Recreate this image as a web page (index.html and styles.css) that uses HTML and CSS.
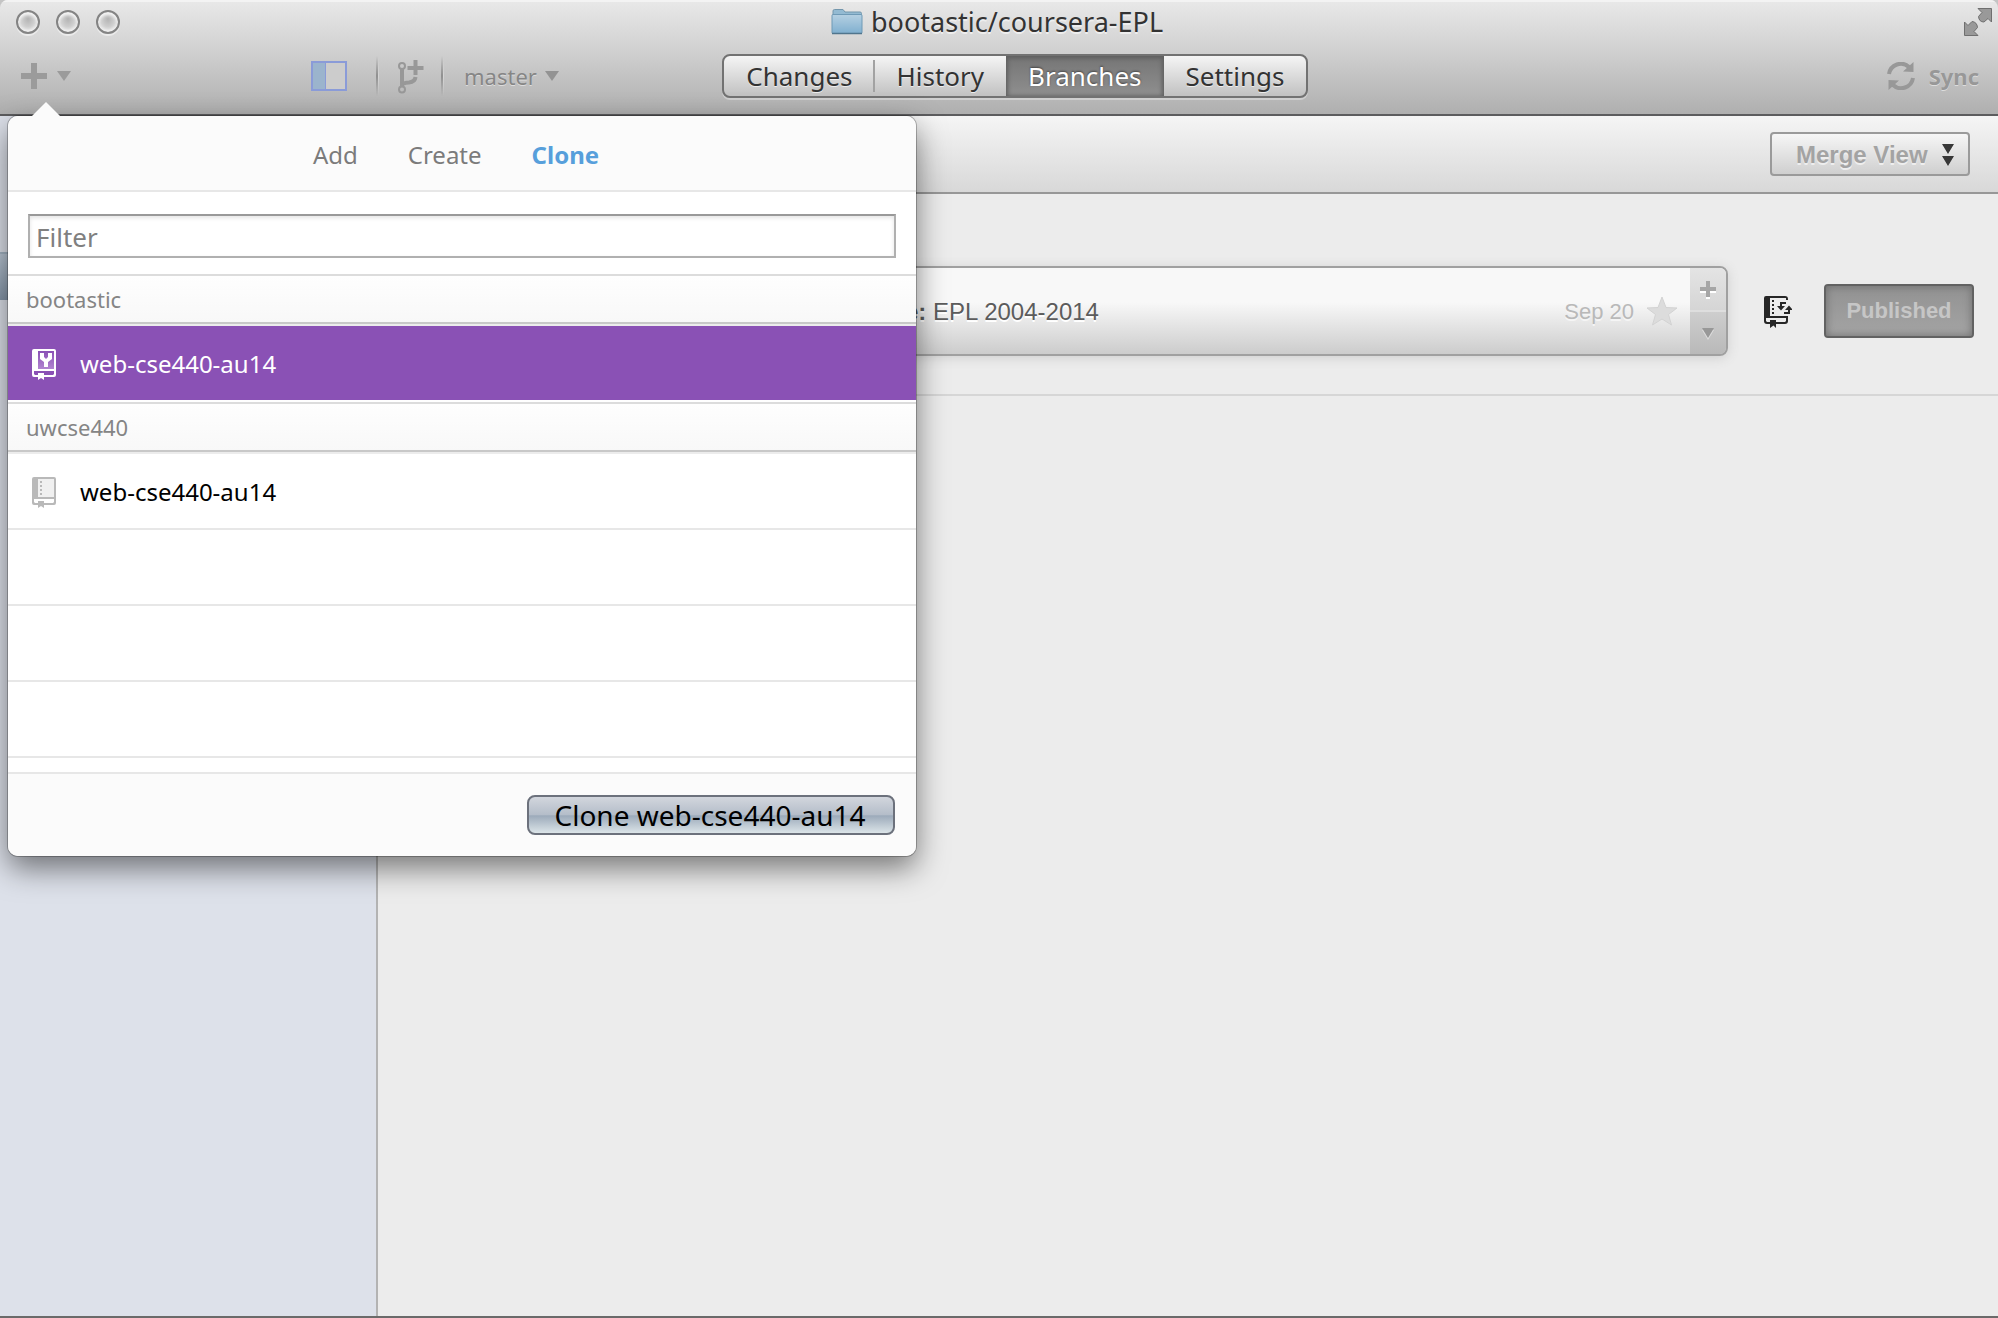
FILE: index.html
```
<!DOCTYPE html>
<html lang="en">
<head>
<meta charset="utf-8">
<title>bootastic/coursera-EPL</title>
<link rel="stylesheet" href="styles.css">
</head>
<body>
<div class="window">
  <header class="chrome">
    <div class="titlebar">
      <div class="lights">
        <button class="light" aria-label="Close"></button>
        <button class="light" aria-label="Minimize"></button>
        <button class="light" aria-label="Zoom"></button>
      </div>
      <h1 class="title">
        <svg width="32" height="28" viewBox="0 0 32 28" aria-hidden="true">
          <defs><linearGradient id="folder" x1="0" y1="0" x2="0" y2="1"><stop offset="0" stop-color="#b5d0e2"/><stop offset="1" stop-color="#7fafcf"/></linearGradient></defs>
          <path d="M2 6V3Q2 1.500 3.500 1.500H12L14 4H29Q30.500 4 30.500 5.500V8H2Z" fill="#93bad2" stroke="#7396ac"/>
          <rect x="1" y="6.500" width="30" height="19" rx="1" fill="url(#folder)" stroke="#6f9ab6"/>
          <path d="M1 25.500H31" stroke="#50758d" stroke-width="1.500"/>
        </svg>
        <span>bootastic/coursera-EPL</span>
      </h1>
      <button class="fullscreen" aria-label="Enter full screen">
        <svg width="28" height="28" viewBox="0 0 28 28"><g fill="#999" stroke="#6f6f6f"><path d="M14 .500H27.500V14L24 10.500L20 14Q15 14 14.500 8.500L18 4.500Z"/><path d="M14 27.500H.500V14L4 17.500L8 13.500Q13 14 13.500 19.500L10 23.500Z"/></g></svg>
      </button>
    </div>
    <div class="toolbar">
      <div class="tools">
        <div class="tools-side">
          <button class="tool add" aria-label="Add repository">
            <svg width="26" height="26" viewBox="0 0 26 26"><path d="M10 0H16V10H26V16H16V26H10V16H0V10H10Z" fill="#9b9b9b"/></svg>
            <svg width="14" height="10" viewBox="0 0 14 10"><path d="M0 0H14L7 10Z" fill="#9b9b9b"/></svg>
          </button>
          <button class="tool" aria-label="Toggle sidebar">
            <svg width="36" height="30" viewBox="0 0 36 30"><rect x="1" y="1" width="34" height="28" fill="#cccccc" stroke="#8a9bd8" stroke-width="2"/><rect x="2" y="2" width="12" height="26" fill="#9bb4cd"/><path d="M14.500 2V28" stroke="#8a9bd8"/></svg>
          </button>
        </div>
        <span class="rule"></span>
        <button class="tool branch-new" aria-label="New branch">
          <svg width="28" height="36" viewBox="0 -2 28 36" fill="none" stroke="#989898">
            <circle cx="5" cy="6" r="3" stroke-width="2"/><circle cx="5" cy="29.500" r="3" stroke-width="2"/>
            <path d="M5 9V26.500" stroke-width="4"/><path d="M6 24Q8 22.500 12 22.500Q18 22 18.500 17" stroke-width="4"/>
            <path d="M18.500 0V15M10.500 8H26.500" stroke-width="4"/>
          </svg>
        </button>
        <span class="rule"></span>
        <button class="tool branch-pick">master
          <svg width="14" height="10" viewBox="0 0 14 10"><path d="M0 0H14L7 10Z" fill="#939393"/></svg>
        </button>
      </div>
      <nav class="segments">
        <button class="segment divided">Changes</button>
        <button class="segment">History</button>
        <button class="segment active">Branches</button>
        <button class="segment">Settings</button>
      </nav>
      <button class="tool sync">
        <svg width="28" height="28" viewBox="0 0 28 28"><path d="M2 12A12 12 0 0 1 22 5M26 16A12 12 0 0 1 6 23" fill="none" stroke="#989898" stroke-width="4"/><path d="M26.500 0V10L16 9.500ZM1.500 28V18L12 18.500Z" fill="#989898"/></svg>
        Sync
      </button>
    </div>
  </header>

  <div class="body">
    <aside class="sidebar"><div class="sidebar-selected"></div></aside>
    <main class="main">
      <div class="subbar">
        <button class="merge">Merge View
          <svg width="12" height="22" viewBox="0 0 12 22"><path d="M0 0H12L6 10ZM0 12H12L6 22Z" fill="#383838"/></svg>
        </button>
      </div>
      <section class="branch-row">
        <div class="card">
          <p class="commit"><b>e:</b> EPL 2004-2014</p>
          <time class="date">Sep 20</time>
          <svg class="star" width="32" height="30" viewBox="0 0 32 30" aria-hidden="true"><path d="M16 1L20 11.500L31 12L22.500 18.500L25.500 29L16 23L6.500 29L9.500 18.500L1 12L12 11.500Z" fill="#dcdcdc" stroke="#d2d2d2"/></svg>
          <div class="card-actions">
            <button class="card-action" aria-label="Add"><svg width="16" height="18" viewBox="0 0 16 18"><path d="M8 2V18M0 10H16" stroke="#fff" stroke-width="4"/><path d="M8 0V16M0 8H16" stroke="#a6a6a6" stroke-width="4"/></svg></button>
            <button class="card-action lower" aria-label="More"><svg width="12" height="12" viewBox="0 0 12 12"><path d="M0 2H12L6 12Z" fill="#ddd"/><path d="M0 0H12L6 10Z" fill="#989898"/></svg></button>
          </div>
        </div>
        <svg class="repo" width="32" height="36" viewBox="0 -2 32 36" aria-hidden="true">
          <path d="M6 1H25Q28 1 28 4V5H26V3H10V21H28V26Q28 29 25 29H16V33L13.500 30.500L10 33V29H7Q4 29 4 26V3Q4 1 6 1ZM6 23V26L7 27H10V25H16V27H25L26 26V23Z" fill="#262626" fill-rule="evenodd"/>
          <path d="M13 5V19" stroke="#262626" stroke-width="2" stroke-dasharray="2 2"/>
          <path d="M26 8H21V12M24 18H29V14" fill="none" stroke="#262626" stroke-width="2"/>
          <path d="M17 11H25L21 15.500ZM25 15L29 10.500L33 15Z" fill="#262626"/>
        </svg>
        <button class="published">Published</button>
      </section>
    </main>
  </div>

  <div class="popover" role="dialog" aria-label="Clone a repository">
    <span class="pointer"></span>
    <nav class="tabs">
      <button class="tab">Add</button>
      <button class="tab">Create</button>
      <button class="tab current">Clone</button>
    </nav>
    <div class="filter"><input class="filter-input" type="text" placeholder="Filter" aria-label="Filter"></div>
    <h2 class="group">bootastic</h2>
    <button class="item selected">
      <svg width="24" height="34" viewBox="0 -3 24 34" aria-hidden="true">
        <defs><linearGradient id="cover" x1="0" y1="0" x2="0" y2="1"><stop offset="0" stop-color="#8a51b5"/><stop offset="1" stop-color="#b184d0"/></linearGradient></defs>
        <path d="M6 2H22V20H6Z" fill="url(#cover)"/>
        <path d="M2 0H22Q24 0 24 2V26Q24 28 22 28H12V31L9 29L6 31V28H2Q0 28 0 26V2Q0 0 2 0ZM6 2V20H22V2ZM2 22V25L3 26H6V24H12V26H21L22 25V22Z" fill="#fff" fill-rule="evenodd"/>
        <path d="M8 4H12V8L14 10L16 8V4H20V10L16 13V18H12V13L8 10Z" fill="#fff"/>
      </svg>
      web-cse440-au14
    </button>
    <h2 class="group">uwcse440</h2>
    <button class="item">
      <svg width="24" height="34" viewBox="0 -3 24 34" aria-hidden="true"><path d="M6 2H22V20H6Z" fill="#f0f0f0"/><path d="M2 0H22Q24 0 24 2V26Q24 28 22 28H12V31L9 29L6 31V28H2Q0 28 0 26V2Q0 0 2 0ZM6 2V20H22V2ZM2 22V25L3 26H6V24H12V26H21L22 25V22Z" fill="#b9b9b9" fill-rule="evenodd"/><path d="M9 4V18" stroke="#b9b9b9" stroke-width="2" stroke-dasharray="2 2"/></svg>
      web-cse440-au14
    </button>
    <div class="blank"></div>
    <div class="blank"></div>
    <div class="blank"></div>
    <footer class="popover-foot"><button class="clone">Clone web-cse440-au14</button></footer>
  </div>
</div>
</body>
</html>
```
FILE: styles.css
```
* { box-sizing: border-box; }
html { background: #c4c4c4; }
body {
  margin: 0;
  font-family: "Noto Sans", "Open Sans", sans-serif;
  font-size: 24px;
  color: #333;
}
button {
  margin: 0;
  padding: 0;
  border: 0;
  background: none;
  font: inherit;
  color: inherit;
}
svg { display: block; flex: none; }

.window {
  position: relative;
  display: flex;
  flex-direction: column;
  min-height: 100vh;
  border-bottom: 2px solid #6a6a6a;
  border-radius: 8px 8px 0 0;
  overflow: hidden;
}

/* Title bar and toolbar */
.chrome {
  height: 116px;
  border-bottom: 2px solid #5c5c5e;
  background: linear-gradient(#e9e9e9, #d0d0d0 45%, #afafaf);
  box-shadow: inset 0 2px 0 #f3f3f3;
}
.titlebar {
  display: grid;
  grid-template-columns: 1fr auto 1fr;
  align-items: center;
  height: 44px;
  padding: 0 6px 0 16px;
}
.lights { display: flex; gap: 16px; }
.light {
  width: 24px;
  height: 24px;
  border: 2px solid #848484;
  border-radius: 50%;
  background: radial-gradient(ellipse at 50% 35%, #b4b4b4, #d8d8d8 60%, #b8b8b8);
  box-shadow: 0 2px 0 #ebebeb, inset 0 3px 3px #f4f4f4, inset 0 -2px 3px #f4f4f4;
}
.title {
  display: flex;
  align-items: center;
  gap: 8px;
  margin: 0 14px 0 0;
  font-size: 27px;
  font-weight: 400;
  line-height: 44px;
  text-shadow: 0 2px 0 #eee;
}
.fullscreen { justify-self: end; }
.toolbar {
  display: grid;
  grid-template-columns: 36% auto 1fr;
  column-gap: 3px;
  align-items: center;
  height: 64px;
}
.tools { display: flex; align-items: center; }
.tools-side {
  display: flex;
  justify-content: space-between;
  width: 376px;
  padding: 0 29px 0 21px;
}
.tool { display: flex; align-items: center; color: #868686; text-shadow: 0 1px 0 #ddd; }
.add { gap: 10px; }
.rule {
  width: 3px;
  height: 40px;
  background: linear-gradient(to right, #8f8f8f 2px, #d5d5d5 2px);
  -webkit-mask: linear-gradient(transparent, #000, transparent);
  mask: linear-gradient(transparent, #000, transparent);
}
.branch-new { padding: 0 16px 0 18px; }
.branch-pick { gap: 8px; padding-left: 20px; font-size: 22px; }
.sync {
  gap: 14px;
  justify-self: end;
  padding-right: 19px;
  font-size: 22px;
  font-weight: 700;
  color: #989898;
}
.segments {
  display: flex;
  height: 44px;
  border: 2px solid #727272;
  border-radius: 8px;
  background: linear-gradient(#f5f5f5, #c1c1c1);
  box-shadow: 0 2px 0 #cfcfcf;
}
.segment { position: relative; padding: 0 22px; font-size: 26px; line-height: 40px; text-shadow: 0 1px 0 #eee; }
.divided::after {
  content: "";
  position: absolute;
  top: 4px;
  right: 0;
  bottom: 4px;
  width: 2px;
  background: #a2a2a2;
}
.segment.active {
  background: linear-gradient(#757575, #8f8f8f);
  box-shadow: inset 2px 2px 4px #606060, inset -2px 0 4px #606060;
  color: #fff;
  text-shadow: 0 -1px 2px #444;
}

/* Content behind the popover */
.body { display: flex; flex: 1; }
.sidebar { flex: 0 0 378px; padding-top: 136px; border-right: 2px solid #b3b3b3; background: #dde1ea; }
.sidebar-selected { height: 48px; border-top: 2px solid #a3b4c3; background: linear-gradient(#b9c6d4, #8697aa); }
.main { flex: 1; background: #ececec; }
.subbar {
  display: flex;
  justify-content: flex-end;
  align-items: center;
  height: 78px;
  padding-right: 28px;
  border-bottom: 2px solid #979797;
  background: linear-gradient(#f5f5f5, #d8d8d8);
}
.merge {
  display: flex;
  align-items: center;
  justify-content: space-between;
  width: 200px;
  height: 44px;
  padding: 2px 14px 0 24px;
  border: 2px solid #9a9a9a;
  border-radius: 4px;
  background: linear-gradient(#f6f6f6, #cfcfcf);
  font-family: "Liberation Sans", Arial, sans-serif;
  font-size: 24px;
  font-weight: 700;
  color: #a3a3a3;
  text-shadow: 0 2px 0 #eee;
}
.branch-row {
  display: flex;
  align-items: center;
  gap: 32px;
  padding: 72px 24px 38px 18px;
  border-bottom: 2px solid #d6d6d6;
  font-family: "Liberation Sans", Arial, sans-serif;
}
.card {
  display: flex;
  flex: 1;
  align-items: center;
  height: 90px;
  padding-left: 507px;
  border: 2px solid #a0a0a0;
  border-radius: 8px;
  background: linear-gradient(#f8f8f8 40%, #cccccc);
  box-shadow: 0 2px 12px #cfcfcf;
  overflow: hidden;
}
.commit { flex: 1; margin: 0; padding-top: 2px; color: #5c5c5c; text-shadow: 0 2px 0 #fff; }
.date { padding-top: 2px; font-size: 22px; color: #b9b9b9; text-shadow: 0 2px 0 #f5f5f5; }
.star { margin: 0 12px; }
.card-actions { display: flex; flex-direction: column; align-self: stretch; width: 36px; }
.card-action { display: grid; flex: 1; place-items: center; padding-top: 2px; background: linear-gradient(#e4e4e4, #d5d5d5); }
.card-action.lower { border-top: 2px solid #dedede; background: linear-gradient(#cecece, #b9b9b9); }
.published {
  width: 150px;
  height: 54px;
  border: 2px solid #626262;
  border-radius: 4px;
  background: linear-gradient(#929292, #a4a4a4);
  box-shadow: inset 0 0 8px #6c6c6c;
  font-size: 22px;
  font-weight: 700;
  color: #c6c6c6;
}

/* Clone popover, anchored to the add button */
.popover {
  position: absolute;
  top: 116px;
  left: 8px;
  width: 908px;
  border-radius: 10px;
  background: #fff;
  box-shadow: 0 0 0 1px rgba(0, 0, 0, .25), 0 12px 30px rgba(0, 0, 0, .5);
}
.pointer {
  position: absolute;
  top: -14px;
  left: 22px;
  width: 32px;
  height: 16px;
  background: #fbfbfb;
  clip-path: polygon(50% 0, 100% 100%, 0 100%);
}
.tabs {
  display: flex;
  justify-content: center;
  gap: 50px;
  height: 76px;
  padding: 2px 12px 0 0;
  border-bottom: 2px solid #e7e7e7;
  border-radius: 10px 10px 0 0;
  background: #fbfbfb;
}
.tab { color: #7b7b7b; }
.tab.current { font-weight: 700; color: #579fdb; }
.filter { padding: 22px 20px 16px; }
.filter-input {
  display: block;
  width: 100%;
  height: 44px;
  padding: 2px 6px 0;
  border: 2px solid #b0b0b0;
  border-top-color: #999;
  border-radius: 0;
  background: #fff;
  box-shadow: inset 0 2px 4px #e4e4e4;
  font: inherit;
  font-size: 26px;
  outline: none;
}
.filter-input::placeholder { color: #808080; opacity: 1; }
.group {
  height: 52px;
  margin: 0;
  padding-left: 18px;
  border-top: 2px solid #dcdcdc;
  border-bottom: 2px solid #ececec;
  background: linear-gradient(#fefefe, #f8f8f8);
  box-shadow: inset 0 -2px 0 #c8c8c8;
  font-size: 22px;
  font-weight: 400;
  line-height: 46px;
  color: #858585;
}
.item {
  display: flex;
  align-items: center;
  gap: 24px;
  width: 100%;
  height: 76px;
  padding-left: 24px;
  border-bottom: 2px solid #e7e7e7;
  color: #000;
}
.item.selected { border-bottom-color: #fff; background: #8a51b5; color: #fff; }
.blank { height: 76px; border-bottom: 2px solid #e7e7e7; }
.popover-foot {
  display: flex;
  justify-content: flex-end;
  align-items: center;
  height: 84px;
  margin-top: 14px;
  padding-right: 21px;
  border-top: 2px solid #e7e7e7;
  border-radius: 0 0 10px 10px;
  background: #fbfbfb;
}
.clone {
  width: 368px;
  height: 40px;
  padding-right: 2px;
  border: 2px solid #6c717c;
  border-radius: 8px;
  background: linear-gradient(#d2d6dd, #b4bdc9 50%, #9caaba 52%, #dbe4e8);
  font-size: 28px;
  line-height: 32px;
  color: #000;
}
```
